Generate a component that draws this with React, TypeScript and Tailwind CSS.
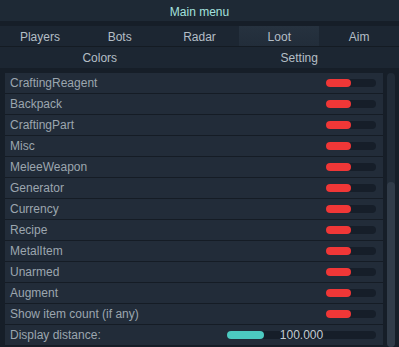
const TABS = ["Players", "Bots", "Radar", "Loot", "Aim"]
const SUBTABS = ["Colors", "Setting"]

const LOOT_ROWS = [
  "CraftingReagent",
  "Backpack",
  "CraftingPart",
  "Misc",
  "MeleeWeapon",
  "Generator",
  "Currency",
  "Recipe",
  "MetalItem",
  "Unarmed",
  "Augment",
  "Show item count (if any)",
]

function Toggle() {
  return (
    <div className="flex h-[8px] w-[50px] rounded-full bg-[#161e29]">
      <div className="h-full w-[25px] rounded-full bg-[#f03737]" />
    </div>
  )
}

function Row({ label, children }: { label: string; children?: React.ReactNode }) {
  return (
    <div className="flex h-[21px] shrink-0 items-center justify-between border-b border-[#151c25] bg-[#222c39] pl-[5px] pr-[7px]">
      <span className="text-[#9ca6af]">{label}</span>
      {children}
    </div>
  )
}

export default function App() {
  return (
    <div className="flex h-[347px] w-[399px] flex-col overflow-hidden bg-[#161e28] font-['Liberation_Sans',Arial,sans-serif] text-[12px]">
      <div className="flex h-[21px] shrink-0 items-center justify-center bg-[#1e2935] pt-[2px] text-[#a4e2de]">
        Main menu
      </div>
      <div className="mt-[5px] grid h-[21px] shrink-0 grid-cols-5 border-b border-[#141b23] bg-[#1c2632]">
        {TABS.map((t) => (
          <div
            key={t}
            className={
              t === "Loot"
                ? "flex items-center justify-center bg-gradient-to-b from-[#26323f] to-[#222d3a] pt-[1px] text-[#b4bec6]"
                : "flex items-center justify-center pt-[1px] text-[#b4bec6]"
            }
          >
            {t}
          </div>
        ))}
      </div>
      <div className="grid h-[21px] shrink-0 grid-cols-2 bg-[#1c2632]">
        {SUBTABS.map((t) => (
          <div key={t} className="flex items-center justify-center pt-[1px] text-[#b4bec6]">
            {t}
          </div>
        ))}
      </div>
      <div className="mt-[5px] flex min-h-0 flex-1 gap-[4px] pl-[5px]">
        <div className="flex w-[378px] flex-col">
          {LOOT_ROWS.map((r) => (
            <Row key={r} label={r}>
              <Toggle />
            </Row>
          ))}
          <Row label="Display distance:">
            <div className="relative flex h-[8px] w-[149px] rounded-full bg-[#161e29]">
              <div className="h-full w-[37px] rounded-full bg-[#4ccac1]" />
              <span className="absolute inset-0 flex items-center justify-center text-[#c3cbd1]">
                100.000
              </span>
            </div>
          </Row>
        </div>
        <div className="mr-[4px] flex w-[8px] flex-col rounded-sm bg-[#212b37]">
          <div className="mt-[109px] flex-1 rounded-sm bg-[#313c49]" />
        </div>
      </div>
    </div>
  )
}
